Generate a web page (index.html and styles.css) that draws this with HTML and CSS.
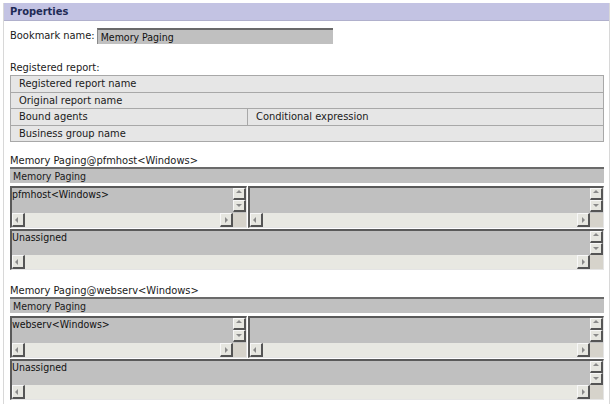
FILE: index.html
```html
<!DOCTYPE html>
<html>
<head>
<meta charset="utf-8">
<link rel="stylesheet" href="styles.css">
</head>
<body>
<div class="panel">
  <div class="hdr">Properties</div>
  <div class="content">
    <div class="bm-row">
      <span class="lbl">Bookmark name:</span>
      <div class="input">Memory Paging</div>
    </div>
    <div class="lbl rr">Registered report:</div>
    <table class="rep">
      <colgroup><col class="c1"><col class="c2"></colgroup>
      <tr><td colspan="2">Registered report name</td></tr>
      <tr><td colspan="2">Original report name</td></tr>
      <tr><td>Bound agents</td><td>Conditional expression</td></tr>
      <tr><td colspan="2">Business group name</td></tr>
    </table>

    <section class="grp">
      <div class="lbl gl">Memory Paging@pfmhost&lt;Windows&gt;</div>
      <div class="field">Memory Paging</div>
      <div class="pair">
        <div class="sbox left">
          <div class="sb-main"><div class="sb-text">pfmhost&lt;Windows&gt;</div><div class="vs"><div class="btn up"></div><div class="btn dn"></div></div></div>
          <div class="hs"><div class="btn lt"></div><div class="track"></div><div class="btn rt"></div><div class="corner"></div></div>
        </div>
        <div class="sbox right">
          <div class="sb-main"><div class="sb-text"></div><div class="vs"><div class="btn up"></div><div class="btn dn"></div></div></div>
          <div class="hs"><div class="btn lt"></div><div class="track"></div><div class="btn rt"></div><div class="corner"></div></div>
        </div>
      </div>
      <div class="sbox tall">
        <div class="sb-main"><div class="sb-text">Unassigned</div><div class="vs"><div class="btn up"></div><div class="btn dn"></div></div></div>
        <div class="hs"><div class="btn lt"></div><div class="track"></div><div class="btn rt"></div><div class="corner"></div></div>
      </div>
    </section>

    <section class="grp">
      <div class="lbl gl">Memory Paging@webserv&lt;Windows&gt;</div>
      <div class="field">Memory Paging</div>
      <div class="pair">
        <div class="sbox left">
          <div class="sb-main"><div class="sb-text">webserv&lt;Windows&gt;</div><div class="vs"><div class="btn up"></div><div class="btn dn"></div></div></div>
          <div class="hs"><div class="btn lt"></div><div class="track"></div><div class="btn rt"></div><div class="corner"></div></div>
        </div>
        <div class="sbox right">
          <div class="sb-main"><div class="sb-text"></div><div class="vs"><div class="btn up"></div><div class="btn dn"></div></div></div>
          <div class="hs"><div class="btn lt"></div><div class="track"></div><div class="btn rt"></div><div class="corner"></div></div>
        </div>
      </div>
      <div class="sbox tall">
        <div class="sb-main"><div class="sb-text">Unassigned</div><div class="vs"><div class="btn up"></div><div class="btn dn"></div></div></div>
        <div class="hs"><div class="btn lt"></div><div class="track"></div><div class="btn rt"></div><div class="corner"></div></div>
      </div>
    </section>
  </div>
</div>
</body>
</html>
```
FILE: styles.css
```css
html, body {
  margin: 0;
  padding: 0;
  background: #ffffff;
  font-family: "DejaVu Sans Condensed", "DejaVu Sans", sans-serif;
  font-size: 11px;
  color: #1a1a1a;
  overflow: hidden;
}
.panel {
  margin: 3px 0 0 3px;
  width: 605px;
  height: 420px;
  border-left: 1px solid #d8d8d8;
  border-right: 1px solid #d8d8d8;
}
.hdr {
  height: 17px;
  line-height: 17px;
  background: #c3c3e3;
  color: #1e2a55;
  font-weight: bold;
  font-size: 11px;
  padding-left: 6px;
  border-bottom: 1px solid #b0b0cc;
}
.content {
  padding: 6px 4px 0 6px;
}
.bm-row {
  display: flex;
  align-items: center;
  gap: 2px;
  height: 17px;
}
.input {
  width: 232px;
  height: 14px;
  line-height: 14px;
  background: #c0c0c0;
  border-top: 2px solid #6a6a6a;
  border-left: 1px solid #8a8a8a;
  font-size: 10.5px;
  padding-left: 3px;
  color: #111;
  margin-top: 1px;
}
.lbl {
  line-height: 13px;
}
.rr {
  margin-top: 17px;
}
.rep {
  width: 594px;
  border-collapse: collapse;
  margin-top: 1px;
  background: #e6e6e6;
  table-layout: fixed;
}
.rep col.c1 { width: 237px; }
.rep td {
  border: 1px solid #a8a8a8;
  height: 15.5px;
  padding: 0 0 0 8px;
  line-height: 15px;
  white-space: nowrap;
}
.grp {
  margin-top: 13px;
  width: 594px;
}
.grp + .grp {
  margin-top: 15px;
}
.gl {
  line-height: 12px;
  margin-bottom: 0;
}
.field {
  height: 14px;
  line-height: 14px;
  background: #c0c0c0;
  border-top: 2px solid #6a6a6a;
  font-size: 10.5px;
  padding-left: 3px;
}
.pair {
  display: flex;
  gap: 1px;
  margin-top: 3px;
}
.sbox {
  display: flex;
  flex-direction: column;
  background: #c0c0c0;
  border-top: 2px solid #5a5a5a;
  border-left: 2px solid #5a5a5a;
  border-bottom: 1px solid #e4e4e4;
  border-right: 1px solid #e4e4e4;
}
.sbox.left { width: 234px; }
.sbox.right { flex: 1; }
.sbox.tall { margin-top: 1px; }
.sb-main {
  display: flex;
  height: 24px;
}
.pair .sb-main { height: 25px; }
.sb-text {
  flex: 1;
  font-size: 10.5px;
  line-height: 13px;
  padding-left: 0;
  color: #111;
}
.vs {
  width: 13px;
  display: flex;
  flex-direction: column;
}
.hs {
  display: flex;
  height: 14px;
  background: #e8e8e2;
}
.track { flex: 1; }
.corner {
  width: 13px;
  background: #d6d3cb;
}
.btn {
  position: relative;
  box-sizing: border-box;
  background: #e6e6e0;
  border-top: 1px solid #f8f8f8;
  border-left: 1px solid #f8f8f8;
  border-right: 2px solid #555;
  border-bottom: 2px solid #555;
}
.vs .btn { height: 12px; width: 13px; }
.hs .btn { width: 13px; height: 14px; }
.btn::after {
  content: "";
  position: absolute;
  width: 0;
  height: 0;
  border: 3px solid transparent;
}
.btn.up::after { left: 2px; top: 1px; border-bottom-color: #8a8a8a; border-top-width: 0; }
.btn.dn::after { left: 2px; top: 3px; border-top-color: #8a8a8a; border-bottom-width: 0; }
.btn.lt::after { left: 2px; top: 3px; border-right-color: #8a8a8a; border-left-width: 0; }
.btn.rt::after { left: 4px; top: 3px; border-left-color: #8a8a8a; border-right-width: 0; }
```
